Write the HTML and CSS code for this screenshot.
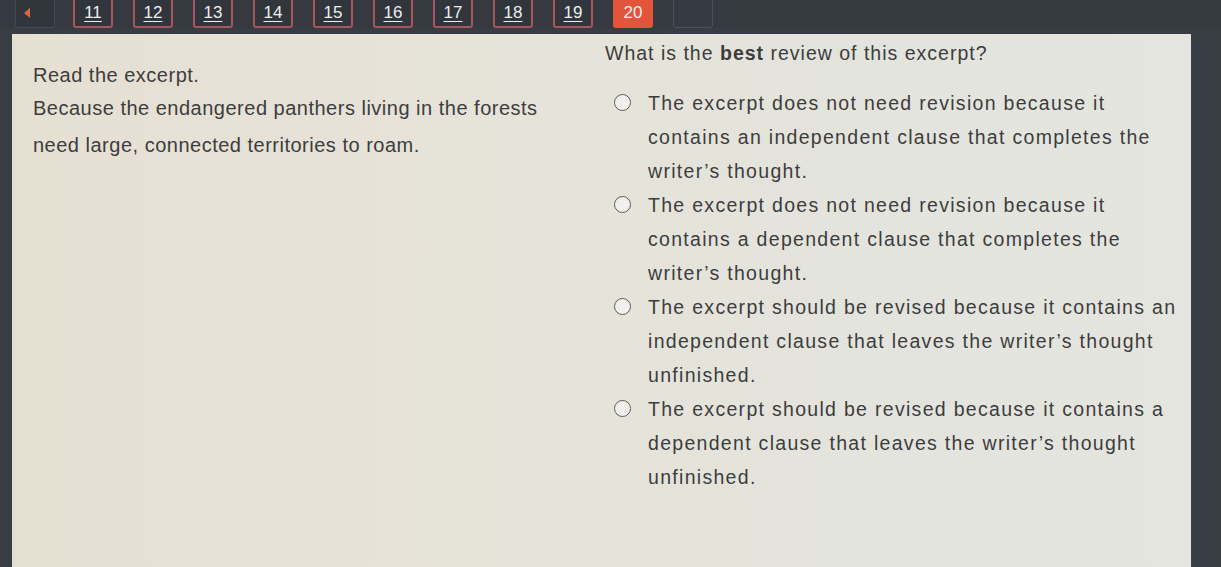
FILE: index.html
```html
<!DOCTYPE html>
<html lang="en">
<head>
<meta charset="utf-8">
<title>Question 20</title>
<link rel="stylesheet" href="styles.css">
</head>
<body>
<div class="screen">
  <nav class="nav">
    <div class="nav-btn nav-back"><span class="tri"></span></div>
    <div class="nav-btn num">11</div>
    <div class="nav-btn num">12</div>
    <div class="nav-btn num">13</div>
    <div class="nav-btn num">14</div>
    <div class="nav-btn num">15</div>
    <div class="nav-btn num">16</div>
    <div class="nav-btn num">17</div>
    <div class="nav-btn num">18</div>
    <div class="nav-btn num">19</div>
    <div class="nav-btn num current">20</div>
    <div class="nav-btn nav-next"></div>
  </nav>
  <main class="panel">
    <section class="excerpt">
      <p class="lead">Read the excerpt.</p>
      <p class="quote">Because the endangered panthers living in the forests need large, connected territories to roam.</p>
    </section>
    <section class="question">
      <p class="prompt">What is the <b>best</b> review of this excerpt?</p>
      <ul class="options">
        <li class="option"><span class="radio"></span><span class="otext">The excerpt does not need revision because it contains an independent clause that completes the writer’s thought.</span></li>
        <li class="option"><span class="radio"></span><span class="otext">The excerpt does not need revision because it contains a dependent clause that completes the writer’s thought.</span></li>
        <li class="option"><span class="radio"></span><span class="otext">The excerpt should be revised because it contains an independent clause that leaves the writer’s thought unfinished.</span></li>
        <li class="option"><span class="radio"></span><span class="otext">The excerpt should be revised because it contains a dependent clause that leaves the writer’s thought unfinished.</span></li>
      </ul>
    </section>
  </main>
</div>
</body>
</html>
```

FILE: styles.css
```css
* { box-sizing: border-box; }
html, body { margin: 0; height: 100%; }
body {
  background: #383c43;
  font-family: "Liberation Sans", Arial, sans-serif;
  overflow: hidden;
}
.screen {
  height: 567px;
  display: flex;
  flex-direction: column;
}
.nav {
  height: 28px;
  display: flex;
  align-items: flex-end;
  padding-left: 15px;
  gap: 20px;
  background: #353940;
}
.nav-btn {
  width: 40px;
  height: 36px;
  border-radius: 0 0 3px 3px;
  display: flex;
  align-items: center;
  justify-content: center;
  color: #eceff2;
  font-size: 17px;
  padding-top: 6px;
  background: #31353c;
}
.nav-back {
  border: 1px solid #454a55;
  margin-right: -2px;
  justify-content: flex-start;
  padding-left: 8px;
}
.tri {
  width: 0; height: 0;
  border-top: 5px solid transparent;
  border-bottom: 5px solid transparent;
  border-right: 6px solid #e0633f;
}
.num {
  border: 2px solid #a8545c;
  text-decoration: underline;
  text-underline-offset: 3px;
}
.current {
  background: #e2553a;
  border-color: #e2553a;
  text-decoration: none;
}
.nav-next {
  border: 1px solid #4b5260;
  background: #353a43;
}
.panel {
  flex: 1;
  margin: 6px 30px 0 12px;
  background: linear-gradient(90deg, #e6e0d3 0%, #e6e3d9 40%, #e3e4dd 75%, #e5e5df 100%);
  display: flex;
  color: #3d3d3d;
}
.excerpt {
  width: 580px;
  padding: 30px 0 0 21px;
  font-size: 20px;
  letter-spacing: 0.5px;
}
.excerpt p { margin: 0; }
.lead { margin-bottom: 3px !important; }
.quote { line-height: 37px; width: 530px; }
.question {
  flex: 1;
  padding: 2px 0 0 13px;
  font-size: 19.5px;
  letter-spacing: 1.3px;
}
.prompt {
  margin: 0 0 16px 0;
  line-height: 34px;
  letter-spacing: 1px;
}
.prompt b { font-weight: bold; }
.options {
  list-style: none;
  margin: 0;
  padding: 0;
}
.option {
  display: flex;
  align-items: flex-start;
  line-height: 34px;
}
.radio {
  flex: none;
  width: 17px;
  height: 17px;
  border: 1.5px solid #5a5a5a;
  border-radius: 50%;
  margin: 8px 17px 0 9px;
  background: #f1f1ec;
}
.otext { width: 534px; }
```
